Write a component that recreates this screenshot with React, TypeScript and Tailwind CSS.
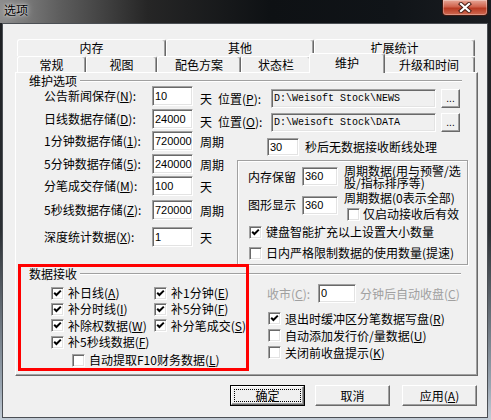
import React from "react";

const raised =
  "border border-t-white border-l-white border-r-[#696969] border-b-[#696969] shadow-[inset_-1px_-1px_0_#a0a0a0]";
const sunken =
  "border border-t-[#a0a0a0] border-l-[#a0a0a0] border-r-white border-b-white shadow-[inset_1px_1px_0_#696969,inset_-1px_-1px_0_#e3e3e3]";

const Key = ({ k }: { k: string }) => (
  <>
    (<u className="underline-offset-1">{k}</u>)
  </>
);

const Check = ({ checked }: { checked?: boolean }) => (
  <span className={`w-[13px] h-[13px] shrink-0 bg-white flex items-center justify-center ${sunken}`}>
    {checked && (
      <svg width="9" height="9" viewBox="0 0 9 9">
        <path d="M1.2 3.8 L3.4 6 L7.8 1.6" stroke="#000" strokeWidth="2" fill="none" />
      </svg>
    )}
  </span>
);

const Field = ({ value, className }: { value: string; className: string }) => (
  <div
    className={`shrink-0 bg-white flex items-center pl-[2px] font-['Liberation_Sans',sans-serif] text-[11px] leading-none text-black ${sunken} ${className}`}
  >
    {value}
  </div>
);

const PathField = ({ value, className }: { value: string; className: string }) => (
  <div
    className={`shrink-0 bg-[#f0f0f0] flex items-center pl-[2px] font-['Liberation_Mono',monospace] text-[10px] leading-none text-black whitespace-nowrap ${sunken} ${className}`}
  >
    {value}
  </div>
);

const Dots = ({ className }: { className: string }) => (
  <div className={`shrink-0 w-[19px] h-[19px] bg-[#f0f0f0] flex items-end justify-center pb-[3px] text-[10px] leading-none font-['Liberation_Sans',sans-serif] ${raised} ${className}`}>
    ...
  </div>
);

const Etched = ({ className }: { className: string }) => (
  <div className={`h-[2px] border-t border-t-[#a0a0a0] border-b border-b-white ${className}`} />
);

const Tab = ({ label, className }: { label: string; className: string }) => (
  <div
    className={`h-full shrink-0 flex items-center justify-center rounded-t-[3px] border border-b-0 border-t-white border-l-white border-r-[#696969] shadow-[inset_-1px_0_0_#a0a0a0] ${className}`}
  >
    {label}
  </div>
);

const Row = ({ label, value, unit }: { label: React.ReactNode; value: string; unit: string }) => (
  <>
    <span className="w-[108px] shrink-0 h-[20px] leading-[20px] whitespace-nowrap">{label}</span>
    <Field value={value} className="w-[41px] h-[20px]" />
    <span className="ml-[7px] mt-[1px] h-[20px] leading-[20px] whitespace-nowrap">{unit}</span>
  </>
);

const CheckRow = ({ checked, label, className }: { checked?: boolean; label: React.ReactNode; className: string }) => (
  <div className={`flex items-center ${className}`}>
    <Check checked={checked} />
    <span className="ml-[4px] leading-[16px] whitespace-nowrap">{label}</span>
  </div>
);

const Button = ({ label, isDefault, className }: { label: React.ReactNode; isDefault?: boolean; className: string }) =>
  isDefault ? (
    <div className={`w-[75px] h-[21px] border border-black bg-[#f0f0f0] flex ${className}`}>
      <div className={`flex-1 flex p-[2px] ${raised}`}>
        <div className="flex-1 flex items-center justify-center border border-dotted border-black leading-none">
          {label}
        </div>
      </div>
    </div>
  ) : (
    <div className={`w-[75px] h-[21px] bg-[#f0f0f0] flex items-center justify-center leading-none ${raised} ${className}`}>
      {label}
    </div>
  );

const App: React.FC = () => {
  return (
    <div className="w-[491px] h-[420px] flex flex-col overflow-hidden bg-[linear-gradient(180deg,#1b1d20_0%,#2c3034_55%,#9aa6b2_92%,#c3ccd6_100%)] font-['Noto_Sans_CJK_SC','Noto_Sans',sans-serif] text-[12px] text-black">
      {/* title bar */}
      <div className="h-[23px] shrink-0 flex items-start justify-between bg-[linear-gradient(90deg,#8d8d8d_0%,#5e5e5e_12%,#262626_30%,#0e1114_55%,#101418_80%,#1a1d21_100%)]">
        <span className="ml-[4px] mt-[1px] leading-[17px] text-[12px] text-black [text-shadow:0_0_6px_rgba(255,255,255,0.9),0_0_2px_rgba(255,255,255,0.8)]">
          选项
        </span>
        <div className="w-[46px] h-[16px] mr-[3px] rounded-b-[4px] border border-t-0 border-[#3f1a12] bg-[linear-gradient(180deg,#e7a797_0%,#d0624c_45%,#b83a22_55%,#cf6a52_100%)] shadow-[inset_0_0_0_1px_rgba(255,255,255,0.3)] flex items-center justify-center">
          <svg width="14" height="11" viewBox="0 0 14 11">
            <path d="M3 2 L11 9 M11 2 L3 9" stroke="#4a2018" strokeWidth="4.2" strokeLinecap="square" />
            <path d="M3 2 L11 9 M11 2 L3 9" stroke="#fff" strokeWidth="2.2" strokeLinecap="square" />
          </svg>
        </div>
      </div>

      {/* client area */}
      <div className="ml-[2px] w-[486px] h-[395px] shrink-0 border border-[#4b4f54] bg-[#f0f0f0] flex flex-col">
        {/* tabs */}
        <div className="ml-[12px] mt-[15px] flex flex-col">
          <div className="ml-[2px] h-[17px] flex">
            <Tab label="内存" className="w-[149px]" />
            <Tab label="其他" className="w-[148px]" />
            <Tab label="扩展统计" className="w-[161px]" />
          </div>
          <div className="ml-[2px] h-[16px] flex items-end">
            <Tab label="常规" className="w-[69px] pt-[1px]" />
            <Tab label="视图" className="w-[71px] pt-[1px]" />
            <Tab label="配色方案" className="w-[84px] pt-[1px]" />
            <Tab label="状态栏" className="w-[70px] pt-[1px]" />
            <div className="relative z-10 w-[76px] h-[20px] shrink-0 -mx-[2px] -mb-[1px] pb-[2px] bg-[#f0f0f0] flex items-center justify-center rounded-t-[3px] border border-b-0 border-t-white border-l-white border-r-[#696969] shadow-[inset_-1px_0_0_#a0a0a0]">
              维护
            </div>
            <Tab label="升级和时间" className="w-[92px] pt-[1px]" />
          </div>

          {/* panel */}
          <div className={`w-[463px] h-[304px] flex flex-col ${raised}`}>
            {/* 维护选项 */}
            <div className="ml-[1px] w-[451px] flex flex-col">
              <div className="mt-[2px] h-[12px] flex items-center">
                <span className="ml-[12px] leading-[12px]">维护选项</span>
                <Etched className="flex-1 ml-[3px] mr-[6px]" />
              </div>
              <div className="pl-[27px] flex flex-col">
                <div className="-mt-[1px] h-[23px] flex items-start">
                  <span className="w-[108px] shrink-0 h-[20px] leading-[20px]">
                    公告新闻保存<Key k="N" />:
                  </span>
                  <Field value="10" className="w-[41px] h-[20px]" />
                  <span className="ml-[7px] w-[18px] mt-[3px] leading-[20px]">天</span>
                  <span className="w-[53px] mt-[3px] leading-[20px] whitespace-nowrap">
                    位置<Key k="P" />:
                  </span>
                  <PathField value="D:\Weisoft Stock\NEWS" className="w-[165px] h-[19px] mt-[3px]" />
                  <Dots className="ml-[5px] mt-[3px]" />
                </div>
                <div className="h-[22px] flex items-start">
                  <span className="w-[108px] shrink-0 h-[20px] leading-[20px]">
                    日线数据存储<Key k="D" />:
                  </span>
                  <Field value="24000" className="w-[41px] h-[20px]" />
                  <span className="ml-[7px] w-[18px] mt-[3px] leading-[20px]">天</span>
                  <span className="w-[53px] mt-[3px] leading-[20px] whitespace-nowrap">
                    位置<Key k="O" />:
                  </span>
                  <PathField value="D:\Weisoft Stock\DATA" className="w-[165px] h-[19px] mt-[4px]" />
                  <Dots className="ml-[5px] mt-[4px]" />
                </div>

                <div className="flex">
                  <div className="w-[193px] shrink-0 flex flex-col">
                    <div className="h-[23px] flex items-start">
                      <Row label={<>1分钟数据存储<Key k="1" />:</>} value="720000" unit="周期" />
                    </div>
                    <div className="h-[22px] flex items-start">
                      <Row label={<>5分钟数据存储<Key k="5" />:</>} value="240000" unit="周期" />
                    </div>
                    <div className="h-[24px] flex items-start">
                      <Row label={<>分笔成交存储<Key k="M" />:</>} value="100" unit="天" />
                    </div>
                    <div className="h-[27px] flex items-start">
                      <Row label={<>5秒线数据存储<Key k="Z" />:</>} value="720000" unit="周期" />
                    </div>
                    <div className="h-[20px] flex items-start">
                      <Row label={<>深度统计数据<Key k="X" />:</>} value="1" unit="天" />
                    </div>
                  </div>

                  <div className="flex flex-col">
                    <div className="mt-[7px] h-[18px] flex items-center">
                      <Field value="30" className="ml-[30px] w-[32px] h-[18px]" />
                      <span className="ml-[6px] whitespace-nowrap">秒后无数据接收断线处理</span>
                    </div>
                    <div className="mt-[4px] w-[231px] h-[105px] border border-[#a0a0a0] shadow-[inset_1px_1px_0_#fff,1px_1px_0_#fff] flex flex-col">
                      <div className="mt-[3px] h-[25px] pl-[10px] flex items-center">
                        <span className="w-[54px] shrink-0">内存保留</span>
                        <Field value="360" className="w-[36px] h-[19px]" />
                        <div className="ml-[6px] flex flex-col">
                          <span className="h-[12px] leading-[12px] whitespace-nowrap">周期数据(用与预警/选</span>
                          <span className="h-[12px] leading-[12px] whitespace-nowrap">股/指标排序等)</span>
                        </div>
                      </div>
                      <div className="mt-[3px] h-[26px] pl-[10px] flex items-start">
                        <div className="h-[26px] flex items-center">
                          <span className="w-[54px] shrink-0">图形显示</span>
                          <Field value="360" className="w-[36px] h-[19px]" />
                        </div>
                        <div className="ml-[6px] flex flex-col">
                          <span className="leading-[12px] whitespace-nowrap">周期数据(0表示全部)</span>
                          <div className="mt-[2px] h-[16px] pl-[3px] flex items-center">
                            <Check />
                            <span className="ml-[3px] whitespace-nowrap">仅启动接收后有效</span>
                          </div>
                        </div>
                      </div>
                      <CheckRow checked label="键盘智能扩充以上设置大小数量" className="mt-[7px] h-[14px] pl-[11px]" />
                      <CheckRow
                        label="日内严格限制数据的使用数量(提速)"
                        className="mt-[7px] h-[14px] pl-[11px]"
                      />
                    </div>
                  </div>
                </div>
              </div>
            </div>

            {/* bottom groups */}
            <div className="flex">
              <div className="-mt-[1px] ml-[2px] w-[231px] h-[107px] shrink-0 border-[3px] border-[#ff0000] flex flex-col">
                <div className="h-[14px] flex items-center">
                  <span className="ml-[8px] leading-[14px]">数据接收</span>
                  <Etched className="flex-1 ml-[3px]" />
                </div>
                <div className="mt-[4px] pl-[30px] flex flex-col">
                  <div className="h-[16px] flex items-center">
                    <CheckRow checked label={<>补日线<Key k="A" /></>} className="w-[103px]" />
                    <CheckRow checked label={<>补1分钟<Key k="E" /></>} className="" />
                  </div>
                  <div className="h-[16px] flex items-center">
                    <CheckRow checked label={<>补分时线<Key k="I" /></>} className="w-[103px]" />
                    <CheckRow checked label={<>补5分钟<Key k="F" /></>} className="" />
                  </div>
                  <div className="h-[17px] flex items-center">
                    <CheckRow checked label={<>补除权数据<Key k="W" /></>} className="w-[103px]" />
                    <CheckRow checked label={<>补分笔成交<Key k="S" /></>} className="" />
                  </div>
                  <div className="h-[16px] flex items-center">
                    <CheckRow checked label={<>补5秒线数据<Key k="F" /></>} className="w-[103px]" />
                  </div>
                </div>
                <CheckRow
                  label={<>自动提取F10财务数据<Key k="L" /></>}
                  className="mt-[2px] h-[16px] pl-[51px]"
                />
              </div>

              <div className="w-[214px] flex flex-col">
                <Etched className="mt-[8px] w-[212px]" />
                <div className="mt-[9px] h-[19px] pl-[18px] flex items-center text-[#a0a0a0]">
                  <span className="w-[51px] shrink-0 whitespace-nowrap">
                    收市<Key k="C" />:
                  </span>
                  <Field value="0" className="w-[38px] h-[19px]" />
                  <span className="ml-[4px] whitespace-nowrap">
                    分钟后自动收盘<Key k="C" />
                  </span>
                </div>
                <CheckRow checked label={<>退出时缓冲区分笔数据写盘<Key k="R" /></>} className="mt-[7px] h-[17px] pl-[19px]" />
                <CheckRow label={<>自动添加发行价/量数据<Key k="U" /></>} className="h-[17px] pl-[19px]" />
                <CheckRow label={<>关闭前收盘提示<Key k="K" /></>} className="h-[17px] pl-[19px]" />
              </div>
            </div>
          </div>
        </div>

        {/* buttons */}
        <div className="ml-[227px] mt-[9px] flex">
          <Button isDefault label="确定" className="" />
          <Button label="取消" className="ml-[10px]" />
          <Button label={<>应用<Key k="A" /></>} className="ml-[12px]" />
        </div>
      </div>
    </div>
  );
};

export default App;
